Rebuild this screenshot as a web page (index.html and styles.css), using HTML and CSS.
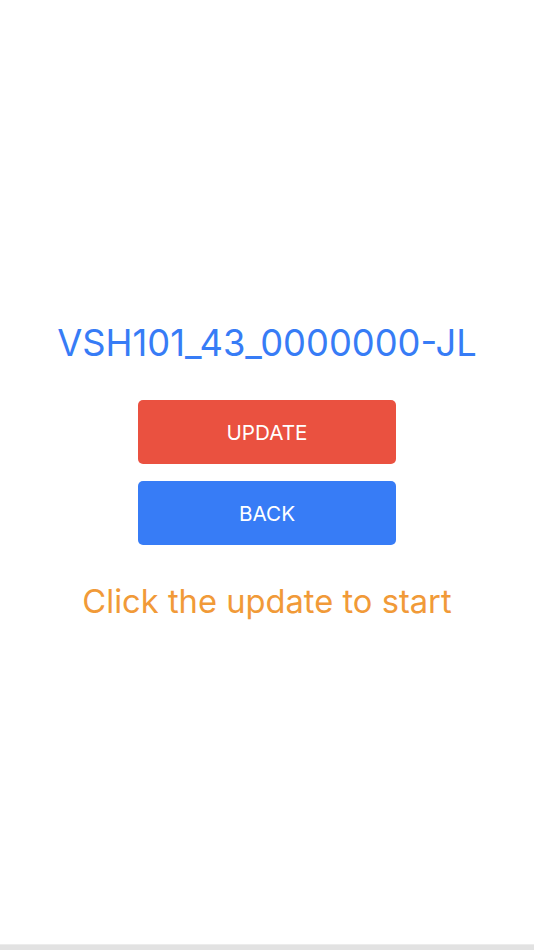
FILE: index.html
```html
<!DOCTYPE html>
<html>
<head>
<meta charset="utf-8">
<link rel="stylesheet" href="styles.css">
</head>
<body>
<div class="page">
  <main class="content">
    <h1 class="title">VSH101_43_0000000-JL</h1>
    <button class="btn btn-update">UPDATE</button>
    <button class="btn btn-back">BACK</button>
    <p class="hint">Click the update to start</p>
  </main>
  <div class="bottom-bar"></div>
</div>
</body>
</html>
```
FILE: styles.css
```css
html, body {
  margin: 0;
  padding: 0;
  background: #ffffff;
}
.page {
  height: 950px;
  display: flex;
  flex-direction: column;
  font-family: Inter, "Liberation Sans", sans-serif;
}
.content {
  flex: 1;
  display: flex;
  flex-direction: column;
  align-items: center;
  padding-top: 318px;
}
.title {
  margin: 0;
  font-size: 36.3px;
  font-weight: 400;
  color: #377cf6;
  line-height: 50px;
  letter-spacing: 0;
}
.btn {
  width: 258px;
  height: 64px;
  border: none;
  border-radius: 5px;
  color: #ffffff;
  font-family: inherit;
  font-size: 20.7px;
  padding: 0;
}
.btn-update {
  margin-top: 32px;
  background: #ea5140;
}
.btn-back {
  margin-top: 17px;
  background: #377cf6;
}
.hint {
  margin: 26px 0 0;
  font-size: 32.7px;
  line-height: 60px;
  color: #f19a38;
}
.bottom-bar {
  height: 6px;
  background: #e2e2e2;
  border-top: 1px solid #ececec;
  box-sizing: border-box;
}
```
